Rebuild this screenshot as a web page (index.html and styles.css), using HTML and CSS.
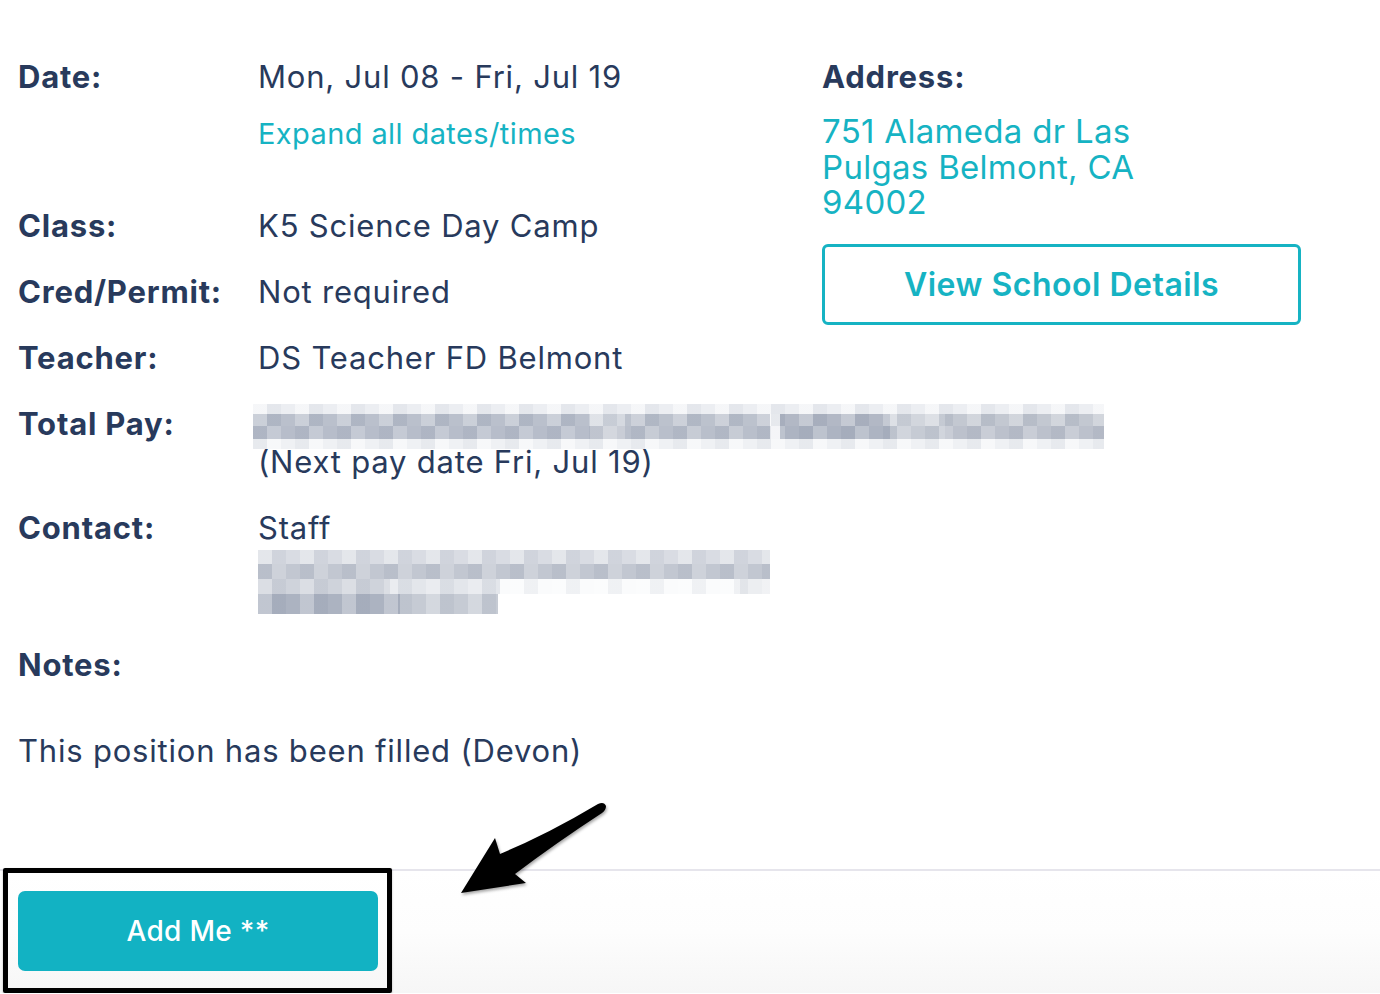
FILE: index.html
```html
<!DOCTYPE html>
<html lang="en">
<head>
  <meta charset="UTF-8" />
  <meta name="viewport" content="width=device-width, initial-scale=1.0" />
  <title>Job Details</title>
  <link rel="stylesheet" href="styles.css">
</head>
<body>
  <div class="details">
    <div class="info">
      <div class="label">Date:</div>
      <div class="value">
        Mon, Jul 08 - Fri, Jul 19
        <a class="expand" href="#">Expand all dates/times</a>
      </div>

      <div class="label">Class:</div>
      <div class="value">K5 Science Day Camp</div>

      <div class="label">Cred/Permit:</div>
      <div class="value">Not required</div>

      <div class="label">Teacher:</div>
      <div class="value">DS Teacher FD Belmont</div>

      <div class="label">Total Pay:</div>
      <div class="value">
        <div class="blur pay-blur">
          <div class="r1"></div><div class="r2"></div><div class="r3"></div><div class="r4"></div>
        </div>
        <div class="next-pay">(Next pay date Fri, Jul 19)</div>
      </div>

      <div class="label">Contact:</div>
      <div class="value">
        Staff
        <div class="blur contact-blur">
          <div class="r1"></div><div class="r2"></div><div class="r3"></div><div class="r4"></div>
        </div>
      </div>

      <div class="label notes-label">Notes:</div>
    </div>

    <div class="address">
      <div class="label">Address:</div>
      <a class="address-link" href="#">751 Alameda dr Las Pulgas Belmont, CA 94002</a>
      <button class="outline-btn">View School Details</button>
    </div>
  </div>

  <p class="note-text">This position has been filled (Devon)</p>

  <div class="footer">
    <button class="add-btn">Add Me **</button>
    <div class="callout-box"></div>
    <svg class="callout-arrow" width="170" height="110" viewBox="440 795 170 110">
      <defs>
        <filter id="shadow" x="-10%" y="-10%" width="130%" height="130%">
          <feDropShadow dx="1" dy="2" stdDeviation="1.5" flood-color="#000" flood-opacity="0.35"/>
        </filter>
      </defs>
      <path filter="url(#shadow)" fill="#000"
        d="M461 891 L495 836 L500 852 Q548 832 598 802 Q604 799 606 804 Q606 808 602 811 Q556 841 515 872 L526 881 Z"/>
    </svg>
  </div>
</body>
</html>
```

FILE: styles.css
```css
body {
  font-family: Inter, Lato, sans-serif;
  color: #283a5c;
  background: #fff;
  margin: 0;
  font-size: 31px;
  line-height: 36px;
  letter-spacing: 0.8px;
  overflow: hidden;
}
a { text-decoration: none; }

.details {
  display: flex;
  padding: 59px 0 0 18px;
}
.info {
  display: grid;
  grid-template-columns: 240px 1fr;
  row-gap: 30px;
  width: 804px;
  align-content: start;
}
.label {
  font-weight: 700;
}
.value {
  white-space: nowrap;
}
.expand {
  display: block;
  color: #16b3c3;
  font-size: 29px;
  letter-spacing: 0.4px;
  margin: 21px 0 26px;
}

.blur {
  position: relative;
}
.pay-blur {
  width: 851px;
  margin: -2px 0 0 -5px;
}
.pay-blur .r1 {
  height: 10px;
  background:
    repeating-linear-gradient(90deg, rgba(255,255,255,0.5) 0 14px, rgba(40,58,92,0.04) 14px 28px, rgba(255,255,255,0) 28px 42px),
    #eceef2;
}
.pay-blur .r2 {
  height: 12px;
  background:
    repeating-linear-gradient(90deg, rgba(255,255,255,0.25) 0 14px, rgba(40,58,92,0.08) 14px 28px, rgba(255,255,255,0) 28px 42px),
    linear-gradient(90deg, #bac0cc 0 337px, #d5d9e0 337px 372px, #bcc2cd 372px 517px, #f7f8fa 517px 527px, #b2b8c5 527px 637px, #d2d6dd 637px 692px, #c3c8d1 692px 851px);
}
.pay-blur .r3 {
  height: 13px;
  background:
    repeating-linear-gradient(90deg, rgba(40,58,92,0.06) 0 14px, rgba(255,255,255,0.2) 14px 28px, rgba(255,255,255,0) 28px 42px),
    linear-gradient(90deg, #b7bdca 0 337px, #c9cdd6 337px 372px, #b9bfcb 372px 517px, #f2f3f6 517px 527px, #adb4c2 527px 637px, #c6cbd4 637px 692px, #bcc1cc 692px 851px);
}
.pay-blur .r4 {
  height: 10px;
  background:
    repeating-linear-gradient(90deg, rgba(40,58,92,0.04) 0 14px, rgba(255,255,255,0.5) 14px 28px, rgba(255,255,255,0) 28px 42px),
    #eff1f4;
}
.next-pay {
  margin-top: -5px;
}

.contact-blur {
  width: 512px;
  margin-top: 4px;
}
.contact-blur .r1 {
  height: 14px;
  background:
    repeating-linear-gradient(90deg, rgba(255,255,255,0.3) 0 14px, rgba(40,58,92,0.05) 14px 28px, rgba(255,255,255,0) 28px 42px),
    #d9dce3;
}
.contact-blur .r2 {
  height: 15px;
  background:
    repeating-linear-gradient(90deg, rgba(40,58,92,0.06) 0 14px, rgba(255,255,255,0.2) 14px 28px, rgba(255,255,255,0) 28px 42px),
    #c2c7d1;
}
.contact-blur .r3 {
  height: 15px;
  background:
    repeating-linear-gradient(90deg, rgba(255,255,255,0.25) 0 14px, rgba(40,58,92,0.05) 14px 28px, rgba(255,255,255,0) 28px 42px),
    linear-gradient(90deg, #cfd3db 0 132px, #e3e6eb 132px 242px, #fafbfc 242px 482px, #eceef1 482px 512px);
}
.contact-blur .r4 {
  height: 20px;
  width: 240px;
  background:
    repeating-linear-gradient(90deg, rgba(255,255,255,0.25) 0 14px, rgba(40,58,92,0.05) 14px 28px, rgba(255,255,255,0) 28px 42px),
    linear-gradient(90deg, #acb3c1 0 142px, #c6cbd4 142px 240px);
}
.notes-label {
  margin-top: 3px;
}

.address {
  width: 479px;
}
.address-link {
  display: block;
  width: 345px;
  color: #16b3c3;
  font-size: 33px;
  letter-spacing: 0.3px;
  line-height: 35.5px;
  margin-top: 19px;
}
.outline-btn {
  display: block;
  width: 479px;
  height: 81px;
  margin-top: 23px;
  border: 3px solid #16b3c3;
  border-radius: 6px;
  background: #fff;
  color: #16b3c3;
  font-family: Inter, sans-serif;
  font-size: 32px;
  font-weight: 600;
  letter-spacing: 0.5px;
  cursor: pointer;
}

.note-text {
  margin: 50px 0 0 18px;
}

.footer {
  position: relative;
  margin-top: 100px;
  border-top: 2px solid #e6e5ec;
  height: 124px;
  padding: 20px 0 0 18px;
  box-sizing: border-box;
  background: linear-gradient(#fff 0%, #fdfdfd 50%, #f6f6f6 100%);
}
.add-btn {
  width: 360px;
  height: 80px;
  border: none;
  border-radius: 7px;
  background: #12b2c3;
  color: #fff;
  font-family: Inter, sans-serif;
  font-size: 28px;
  font-weight: 500;
  letter-spacing: 0.3px;
  cursor: pointer;
}
.callout-box {
  position: absolute;
  left: 3px;
  top: -3px;
  width: 379px;
  height: 115px;
  border: 5px solid #000;
  border-radius: 2px;
  box-shadow: 0 1px 2px rgba(0,0,0,0.3);
}
.callout-arrow {
  position: absolute;
  left: 440px;
  top: -74px;
}
```
